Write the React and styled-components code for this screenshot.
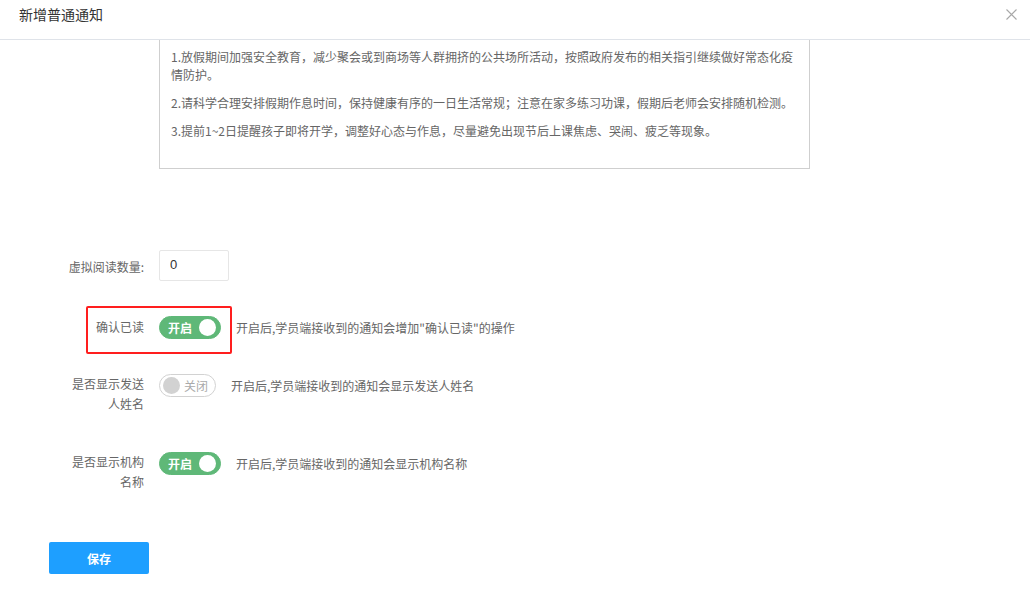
import React from "react";
import styled, { createGlobalStyle } from "styled-components";

const GlobalStyle = createGlobalStyle`
  html, body {
    margin: 0;
    padding: 0;
    background: #fff;
  }
  body {
    font-family: "Noto Sans CJK SC", "Liberation Sans", sans-serif;
    font-size: 12px;
    color: #666;
  }
  * { box-sizing: border-box; }
`;

const Page = styled.div`
  width: 1030px;
  min-height: 605px;
  background: #fff;
`;

const Header = styled.div`
  height: 40px;
  padding: 0 13px 0 19px;
  display: flex;
  align-items: flex-start;
  justify-content: space-between;
  border-bottom: 1px solid #dfe3e9;
`;

const Title = styled.div`
  font-size: 14px;
  line-height: 28px;
  color: #333;
`;

const CloseBtn = styled.div`
  width: 11px;
  height: 11px;
  margin-top: 9px;
  display: flex;
  color: #a8a8a8;
`;

const Body = styled.div`
  padding: 0 0 0 49px;
`;

const ContentBox = styled.div`
  margin-left: 110px;
  width: 651px;
  height: 129px;
  border: 1px solid #cfcfcf;
  border-top: none;
  padding: 8px 10px 0 11px;
  color: #666;
  font-size: 12px;
  line-height: 18px;
`;

const Para = styled.p`
  margin: 0 0 10px;
`;

const Item = styled.div`
  position: relative;
  display: flex;
  align-items: flex-start;
  margin-top: ${(p) => p.$mt}px;
`;

const Label = styled.div`
  width: 95px;
  padding-left: 15px;
  margin-right: 15px;
  padding-top: ${(p) => p.$pt || 0}px;
  text-align: right;
  line-height: 20px;
  font-size: 12px;
  color: #666;
`;

const Input = styled.input`
  width: 70px;
  height: 31px;
  border: 1px solid #e6e6e6;
  border-radius: 2px;
  padding: 0 0 2px 10px;
  font-family: "Liberation Sans", "Noto Sans CJK SC", sans-serif;
  font-size: 13px;
  color: #333;
  outline: none;
  background: #fff;
`;

const Control = styled.div`
  display: flex;
  align-items: center;
  gap: 15px;
`;

const SwitchBox = styled.div`
  position: relative;
  display: flex;
  align-items: center;
  height: 23px;
  width: ${(p) => (p.$on ? 62 : 57)}px;
  border-radius: 12px;
  border: 1px solid ${(p) => (p.$on ? "#5fb878" : "#d2d2d2")};
  background: ${(p) => (p.$on ? "#5fb878" : "#fff")};
  padding-left: ${(p) => (p.$on ? 8 : 3)}px;
  flex-direction: ${(p) => (p.$on ? "row" : "row-reverse")};
  justify-content: ${(p) => (p.$on ? "flex-start" : "flex-end")};
`;

const SwitchText = styled.span`
  font-size: 12px;
  line-height: 21px;
  font-weight: ${(p) => (p.$on ? 700 : 400)};
  color: ${(p) => (p.$on ? "#fff" : "#aaa")};
  margin-left: ${(p) => (p.$on ? 0 : 4)}px;
`;

const Knob = styled.i`
  display: block;
  width: ${(p) => (p.$on ? 17 : 17)}px;
  height: ${(p) => (p.$on ? 17 : 17)}px;
  border-radius: 50%;
  background: ${(p) => (p.$on ? "#fff" : "#d2d2d2")};
  margin-left: ${(p) => (p.$on ? "auto" : "0")};
  margin-right: ${(p) => (p.$on ? 4 : 0)}px;
`;

const Desc = styled.span`
  font-size: 12px;
  line-height: 20px;
  color: #666;
`;

const Highlight = styled.div`
  position: absolute;
  left: 37px;
  top: -10px;
  width: 146px;
  height: 48px;
  border: 2px solid #ff1e1e;
  border-radius: 2px;
  pointer-events: none;
`;

const SaveButton = styled.button`
  display: block;
  margin-top: 50px;
  width: 100px;
  height: 32px;
  border: none;
  border-radius: 2px;
  background: #1e9fff;
  color: #fff;
  font-family: "Noto Sans CJK SC", sans-serif;
  font-size: 12px;
  font-weight: 700;
  cursor: pointer;
`;

function Switch({ on }) {
  return (
    <SwitchBox $on={on}>
      <SwitchText $on={on}>{on ? "开启" : "关闭"}</SwitchText>
      <Knob $on={on} />
    </SwitchBox>
  );
}

export default function App() {
  return (
    <Page>
      <GlobalStyle />
      <Header>
        <Title>新增普通通知</Title>
        <CloseBtn>
          <svg width="11" height="11" viewBox="0 0 11 11">
            <path d="M0.5 0.5 L10.5 10.5 M10.5 0.5 L0.5 10.5" stroke="currentColor" strokeWidth="1.1" fill="none" />
          </svg>
        </CloseBtn>
      </Header>
      <Body>
        <ContentBox>
          <Para>1.放假期间加强安全教育，减少聚会或到商场等人群拥挤的公共场所活动，按照政府发布的相关指引继续做好常态化疫情防护。</Para>
          <Para>2.请科学合理安排假期作息时间，保持健康有序的一日生活常规；注意在家多练习功课，假期后老师会安排随机检测。</Para>
          <Para>3.提前1~2日提醒孩子即将开学，调整好心态与作息，尽量避免出现节后上课焦虑、哭闹、疲乏等现象。</Para>
        </ContentBox>

        <Item $mt={81}>
          <Label $pt={7}>虚拟阅读数量:</Label>
          <Input defaultValue="0" />
        </Item>

        <Item $mt={35}>
          <Highlight />
          <Label $pt={1}>确认已读</Label>
          <Control>
            <Switch on />
            <Desc>开启后,学员端接收到的通知会增加"确认已读"的操作</Desc>
          </Control>
        </Item>

        <Item $mt={35}>
          <Label>是否显示发送人姓名</Label>
          <Control>
            <Switch on={false} />
            <Desc>开启后,学员端接收到的通知会显示发送人姓名</Desc>
          </Control>
        </Item>

        <Item $mt={38}>
          <Label>是否显示机构名称</Label>
          <Control>
            <Switch on />
            <Desc>开启后,学员端接收到的通知会显示机构名称</Desc>
          </Control>
        </Item>

        <SaveButton>保存</SaveButton>
      </Body>
    </Page>
  );
}
